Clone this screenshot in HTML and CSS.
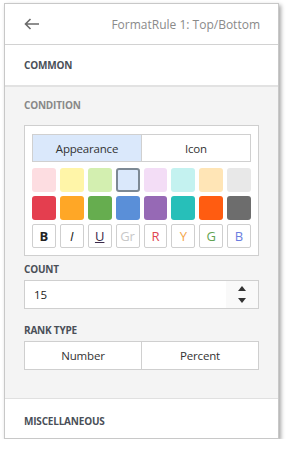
FILE: index.html
```html
<!DOCTYPE html>
<html>
  <head lang="en">
    <meta charset="UTF-8" />
    <title>FormatRule</title>
    <link rel="stylesheet" href="styles.css">
  </head>
  <body>
    <div class="panel">
      <div class="header">
        <svg class="back" width="16" height="12" viewBox="0 0 16 12">
          <path d="M15 6H2M6.5 1L1.5 6l5 5" fill="none" stroke="#6b6b6b" stroke-width="1.6" />
        </svg>
        <span class="title">FormatRule 1: Top/Bottom</span>
      </div>

      <div class="section collapsed">COMMON</div>

      <div class="section open">
        <div class="label muted">CONDITION</div>
        <div class="box">
          <div class="tabs">
            <div class="tab active">Appearance</div>
            <div class="tab">Icon</div>
          </div>
          <div class="swatches">
            <div class="sw" style="background:#fddde1"></div>
            <div class="sw" style="background:#fff5a8"></div>
            <div class="sw" style="background:#d3efb0"></div>
            <div class="sw selected" style="background:#dae8fb"></div>
            <div class="sw" style="background:#f3ddf6"></div>
            <div class="sw" style="background:#c4f2f0"></div>
            <div class="sw" style="background:#ffe5b6"></div>
            <div class="sw" style="background:#e8e8e8"></div>

            <div class="sw" style="background:#e43e4f"></div>
            <div class="sw" style="background:#ffa726"></div>
            <div class="sw" style="background:#66ad4f"></div>
            <div class="sw" style="background:#5a8fd8"></div>
            <div class="sw" style="background:#9669b5"></div>
            <div class="sw" style="background:#27bfb9"></div>
            <div class="sw" style="background:#ff5c11"></div>
            <div class="sw" style="background:#6d6d6d"></div>

            <div class="fb bold">B</div>
            <div class="fb italic">I</div>
            <div class="fb under">U</div>
            <div class="fb" style="color:#c8c8c8">Gr</div>
            <div class="fb" style="color:#e04552">R</div>
            <div class="fb" style="color:#f4a64a">Y</div>
            <div class="fb" style="color:#62a452">G</div>
            <div class="fb" style="color:#6b7de0">B</div>
          </div>
        </div>

        <div class="label">COUNT</div>
        <div class="spin">
          <span class="value">15</span>
          <div class="arrows">
            <svg width="8" height="5" viewBox="0 0 8 5"><path d="M0 5L4 0L8 5Z" fill="#333" /></svg>
            <svg width="8" height="5" viewBox="0 0 8 5"><path d="M0 0L4 5L8 0Z" fill="#333" /></svg>
          </div>
        </div>

        <div class="label">RANK TYPE</div>
        <div class="toggle">
          <div class="opt">Number</div>
          <div class="opt">Percent</div>
        </div>
      </div>

      <div class="section collapsed last">MISCELLANEOUS</div>
    </div>
  </body>
</html>
```

FILE: styles.css
```css
body {
  margin: 0;
  background: #fff;
  font-family: "Segoe UI", "Open Sans", "Noto Sans", sans-serif;
}

.panel {
  box-sizing: border-box;
  width: 275px;
  height: 436px;
  margin: 3px 0 0 4px;
  border: 1px solid #c8c8c8;
  background: #fff;
  box-shadow: 2px 2px 4px rgba(0, 0, 0, 0.35);
  display: flex;
  flex-direction: column;
}

.header {
  height: 40px;
  border-bottom: 1px solid #d2d2d2;
  display: flex;
  align-items: center;
  justify-content: space-between;
  padding: 0 18px 0 19px;
}

.back {
  display: block;
}

.title {
  font-size: 12px;
  color: #8a8a8a;
}

.section {
  padding: 0 19px;
}

.collapsed {
  height: 40px;
  display: flex;
  align-items: center;
  font-size: 10px;
  font-weight: 700;
  letter-spacing: -0.2px;
  color: #4a4f58;
  border-bottom: 2px solid #e2e2e2;
}

.collapsed.last {
  border-bottom: 0;
  border-top: 1px solid #e0e0e0;
  height: 39px;
  padding-top: 4px;
  flex: 1;
}

.open {
  background: #f4f4f4;
  padding-top: 11px;
  padding-bottom: 28px;
}

.label {
  font-size: 10px;
  font-weight: 700;
  letter-spacing: -0.2px;
  color: #4a4f58;
  line-height: 14px;
  margin-bottom: 4px;
}

.label.muted {
  color: #888;
  margin-bottom: 13px;
}

.box {
  background: #fff;
  border: 1px solid #cfcfcf;
  padding: 8px 7px 7px;
  margin-bottom: 6px;
}

.tabs {
  display: flex;
  height: 28px;
  border: 1px solid #d0d0d0;
  box-sizing: border-box;
  margin-bottom: 6px;
}

.tab {
  flex: 1;
  display: flex;
  align-items: center;
  justify-content: center;
  font-size: 11.5px;
  letter-spacing: -0.2px;
  color: #333;
}

.tab.active {
  background: #dae8fb;
  border-right: 1px solid #d0d0d0;
}

.swatches {
  display: grid;
  grid-template-columns: repeat(8, 1fr);
  grid-auto-rows: 24px;
  gap: 4px;
}

.sw {
  border-radius: 3px;
}

.sw.selected {
  box-sizing: border-box;
  border: 2px solid #7d8994;
}

.fb {
  box-sizing: border-box;
  border: 1px solid #cfcfcf;
  border-radius: 2px;
  display: flex;
  align-items: center;
  justify-content: center;
  font-size: 13px;
  color: #222;
}

.fb.bold {
  font-weight: 700;
}

.fb.italic {
  font-style: italic;
}

.fb.under {
  text-decoration: underline;
  color: #3a2a4a;
}

.spin {
  box-sizing: border-box;
  height: 29px;
  border: 1px solid #cfcfcf;
  background: #fff;
  display: flex;
  align-items: center;
  justify-content: space-between;
  margin-bottom: 14px;
}

.value {
  font-size: 11.5px;
  color: #222;
  padding-left: 9px;
}

.arrows {
  width: 32px;
  height: 100%;
  background: #f9f9f9;
  display: flex;
  flex-direction: column;
  align-items: center;
  justify-content: center;
  gap: 7px;
}

.arrows svg {
  display: block;
}

.toggle {
  box-sizing: border-box;
  height: 29px;
  border: 1px solid #cfcfcf;
  background: #fff;
  display: flex;
}

.opt {
  flex: 1;
  display: flex;
  align-items: center;
  justify-content: center;
  font-size: 11.5px;
  letter-spacing: -0.2px;
  color: #333;
}

.opt:first-child {
  border-right: 1px solid #d0d0d0;
}
```
